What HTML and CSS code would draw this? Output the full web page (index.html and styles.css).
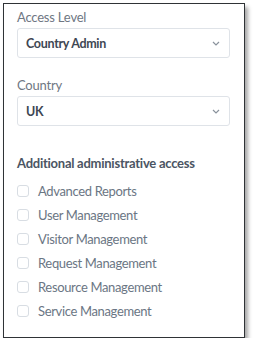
FILE: index.html
```html
<!DOCTYPE html>
<html>
<head>
<meta charset="utf-8">
<link rel="stylesheet" href="styles.css">
</head>
<body>
<div class="card">
  <div class="field">
    <div class="label">Access Level</div>
    <div class="select"><span>Country Admin</span><svg class="chev" width="8" height="5" viewBox="0 0 8 5"><path d="M1 1 L4 4 L7 1" fill="none" stroke="#8a929c" stroke-width="1.2"/></svg></div>
  </div>
  <div class="field">
    <div class="label">Country</div>
    <div class="select"><span>UK</span><svg class="chev" width="8" height="5" viewBox="0 0 8 5"><path d="M1 1 L4 4 L7 1" fill="none" stroke="#8a929c" stroke-width="1.2"/></svg></div>
  </div>
  <div class="heading">Additional administrative access</div>
  <ul class="checks">
    <li><span class="box"></span>Advanced Reports</li>
    <li><span class="box"></span>User Management</li>
    <li><span class="box"></span>Visitor Management</li>
    <li><span class="box"></span>Request Management</li>
    <li><span class="box"></span>Resource Management</li>
    <li><span class="box"></span>Service Management</li>
  </ul>
</div>
</body>
</html>
```
FILE: styles.css
```css
html, body { margin: 0; padding: 0; background: #fff; }
body { font-family: Lato, "Open Sans", sans-serif; }
.card {
  margin: 3px 0 0 3px;
  border: 1px solid #2f3336;
  background: #fff;
  box-shadow: 3px 4px 4px rgba(0,0,0,0.35);
  padding: 5px 14px 0 13px;
  width: 213px;
  height: 328px;
}
.field { margin-bottom: 19px; }
.label { font-size: 13px; line-height: 16px; color: #6f7783; letter-spacing: -0.2px; }
.select {
  margin-top: 3px;
  height: 28px;
  border: 1px solid #dfe3e8;
  border-radius: 3px;
  display: flex;
  align-items: center;
  justify-content: space-between;
  padding: 0 9px 0 8px;
}
.select span { font-size: 12.5px; font-weight: 700; color: #3e4753; letter-spacing: -0.3px; }
.chev { display: block; }
.heading { font-size: 13px; font-weight: 700; color: #4b5563; line-height: 16px; margin-top: 29px; letter-spacing: -0.25px; }
.checks { list-style: none; margin: 8px 0 0; padding: 0; }
.checks li {
  display: flex; align-items: center;
  height: 24px;
  font-size: 13px; color: #6b7684;
  letter-spacing: -0.35px;
}
.box {
  width: 10px; height: 10px;
  border: 1px solid #d8dde3;
  border-radius: 3px;
  margin-right: 9px;
}
```
